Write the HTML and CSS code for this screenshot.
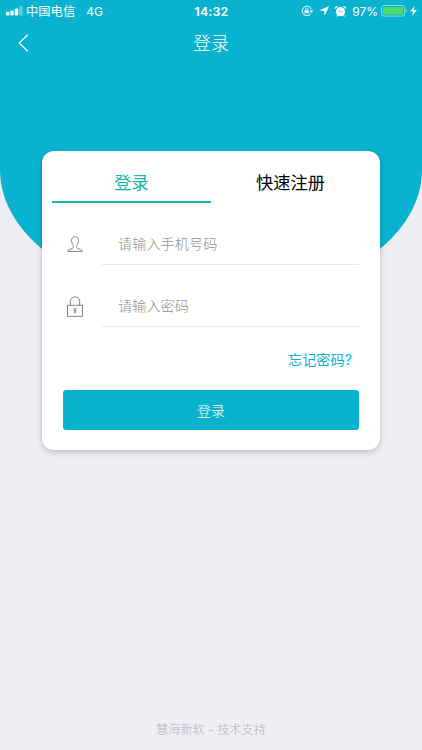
FILE: index.html
```html
<!DOCTYPE html>
<html lang="zh-CN">
<head>
    <meta charset="UTF-8">
    <meta name="viewport" content="width=device-width, initial-scale=1.0">
    <title>登录</title>
    <link rel="stylesheet" href="styles.css">
</head>
<body>
    <header class="header">
        <div class="status-bar">
            <div class="status-left">
                <svg class="signal" width="18" height="10" viewBox="0 0 18 10" fill="#fff">
                    <rect x="0" y="5.8" width="3.4" height="3.7" rx="1"/>
                    <rect x="4.4" y="4.4" width="3.4" height="5.1" rx="1"/>
                    <rect x="8.8" y="2.4" width="3.4" height="7.1" rx="1"/>
                    <rect x="13.2" y="0" width="3.4" height="9.5" rx="1" opacity=".35"/>
                </svg>
                <span class="carrier">中国电信</span>
                <span class="network">4G</span>
            </div>
            <div class="time">14:32</div>
            <div class="status-right">
                <svg class="rotate" width="13" height="12" viewBox="0 0 13 12" fill="none" stroke="#fff">
                    <path d="M9.6 8.9A4.7 4.7 0 1 1 10.3 4.2"/>
                    <path d="M8.4 5.4h4L10.4 8z" fill="#fff" stroke="none"/>
                    <rect x="3.6" y="5.2" width="4.2" height="3.1" fill="#fff" stroke="none"/>
                    <path d="M4.5 5.3V4.4a1.2 1.2 0 0 1 2.4 0v.9" stroke-width=".8"/>
                </svg>
                <svg class="location" width="10" height="10" viewBox="0 0 10 10" fill="#fff">
                    <path d="M10 0L5.8 9.8 5 5 .2 4.4z"/>
                </svg>
                <svg class="alarm" width="11" height="11" viewBox="0 0 11 11" fill="#fff">
                    <circle cx="5.5" cy="5.7" r="4.6"/>
                    <path d="M.3 2.9A1.8 1.8 0 0 1 3 .6zM10.7 2.9A1.8 1.8 0 0 0 8 .6zM2 9l-.9 1.3.8.5 1.1-1.2zM9 9l.9 1.3-.8.5L8 9.6z"/>
                    <path d="M3.5 4l2 2 1.8-.6" fill="none" stroke="#09b3cf" stroke-width=".8"/>
                </svg>
                <span class="percent">97%</span>
                <svg class="battery" width="27" height="12" viewBox="0 0 27 12">
                    <rect x=".5" y=".5" width="23.2" height="10.6" rx="2.2" fill="none" stroke="#fff" stroke-opacity=".5"/>
                    <rect x="2" y="2" width="20.2" height="7.6" rx="1" fill="#4cd964"/>
                    <path d="M24.8 4v3.6q1.2-.5 1.2-1.8T24.8 4z" fill="#fff" opacity=".5"/>
                </svg>
                <svg class="bolt" width="7" height="10" viewBox="0 0 6 9" fill="#fff">
                    <path d="M4 0L0 5h2.5L1.8 9 6 3.7H3.4z"/>
                </svg>
            </div>
        </div>
        <nav class="nav-bar">
            <a class="back">
                <svg width="11" height="18" viewBox="0 0 11 18" fill="none" stroke="#fff" stroke-width="1.3">
                    <path d="M9.8 .8L1.2 9l8.6 8.2"/>
                </svg>
            </a>
            <h1 class="title">登录</h1>
        </nav>
    </header>

    <main class="card">
        <div class="tabs">
            <div class="tab active">登录</div>
            <div class="tab">快速注册</div>
        </div>
        <form class="form">
            <div class="field">
                <svg class="icon" width="16" height="17" viewBox="0 0 16 17" fill="none" stroke="#777" stroke-width=".9">
                    <path d="M6.3 9.5C5.2 8 4.5 6 4.5 4.3 4.5 2 6 .8 8 .8s3.500 1.200 3.500 3.500c0 1.700-.7 3.700-1.800 5.200-.2 1.300-.1 2.500 1 3l3 1c1 .4 1.500.9 1.600 1.900H.7c.1-1 .6-1.500 1.600-1.900l3-1c1.100-.5 1.200-1.700 1-3z"/>
                </svg>
                <input class="input" type="text" placeholder="请输入手机号码">
            </div>
            <div class="field">
                <svg class="icon" width="16" height="21" viewBox="0 0 16 21" fill="none" stroke="#777" stroke-width=".9">
                    <rect x=".5" y="9.3" width="15" height="11"/>
                    <path d="M3.3 9.3V5.5a4.7 4.7 0 0 1 9.4 0v3.8"/>
                    <circle cx="8" cy="13.5" r="1.2"/>
                    <path d="M8 14.5v3" stroke-width="1.2"/>
                </svg>
                <input class="input" type="password" placeholder="请输入密码">
            </div>
            <a class="forgot">忘记密码?</a>
            <button class="login-btn" type="button">登录</button>
        </form>
    </main>

    <footer class="footer">慧海新软 - 技术支持</footer>
</body>
</html>
```
FILE: styles.css
```css
* {
    box-sizing: border-box;
}
body {
    margin: 0;
    height: 750px;
    display: flex;
    flex-direction: column;
    background: #efeef4;
    font-family: Inter, "Noto Sans CJK SC", sans-serif;
    font-weight: 300;
    overflow: hidden;
}
.header {
    flex: none;
    height: 302px;
    background: #09b3cf;
    border-radius: 0 0 50% 50% / 0 0 132px 132px;
    color: #fff;
}
.status-bar {
    display: grid;
    grid-template-columns: 1fr auto 1fr;
    align-items: center;
    height: 22px;
    padding: 0 5px 0 6px;
    font-size: 12px;
    font-weight: 400;
}
.status-left,
.status-right {
    display: flex;
    align-items: center;
}
.status-right {
    justify-content: flex-end;
}
.carrier {
    margin-left: 2px;
    padding-bottom: 1px;
    font-size: 12.3px;
}
.network {
    margin-left: 11px;
}
.time {
    font-size: 12.4px;
    font-weight: 600;
    letter-spacing: .2px;
}
.location {
    margin-left: 5px;
}
.alarm {
    margin-left: 6px;
}
.percent {
    margin-left: 6px;
}
.battery {
    margin-left: 3px;
}
.bolt {
    margin-left: 2px;
}
.nav-bar {
    display: grid;
    grid-template-columns: 60px 1fr 60px;
    align-items: center;
    height: 42px;
}
.back {
    display: flex;
    padding-left: 18px;
}
.title {
    margin: 0;
    padding-bottom: 2px;
    font-size: 18px;
    font-weight: 300;
    text-align: center;
}
.card {
    flex: none;
    width: 338px;
    height: 299px;
    margin: -151px auto 0;
    padding: 10px;
    background: #fff;
    border-radius: 12px;
    box-shadow: 0 2px 6px rgba(0, 0, 0, .22);
}
.tabs {
    display: flex;
}
.tab {
    flex: 1;
    height: 42px;
    line-height: 44px;
    text-align: center;
    font-size: 17.2px;
    font-weight: 400;
    color: #000;
}
.tab.active {
    color: #16b5a9;
    border-bottom: 2px solid #16b5a9;
}
.form {
    display: flex;
    flex-direction: column;
    padding: 20px 11px 0;
}
.field {
    display: flex;
    align-items: center;
    height: 42px;
    padding-left: 4px;
}
.field + .field {
    margin-top: 20px;
}
.icon {
    flex: none;
    margin-right: 19px;
}
.input {
    flex: 1;
    min-width: 0;
    height: 42px;
    padding: 0 16px;
    border: 0;
    border-bottom: 1px solid #e9e9eb;
    background: none;
    font: inherit;
    font-size: 14.2px;
    outline: none;
}
.input::placeholder {
    color: #8f8f8f;
}
.forgot {
    align-self: flex-end;
    margin: 22px 7px 0 0;
    line-height: 22px;
    font-size: 14.2px;
    font-weight: 400;
    color: #09b3cf;
}
.login-btn {
    height: 40px;
    margin-top: 19px;
    padding: 0;
    border: 0;
    border-radius: 3px;
    background: #09b3cf;
    color: #fff;
    font: inherit;
    font-size: 14px;
}
.footer {
    margin: auto 0 10px;
    line-height: 20px;
    text-align: center;
    font-size: 12.2px;
    color: #b5b4bb;
}
```
